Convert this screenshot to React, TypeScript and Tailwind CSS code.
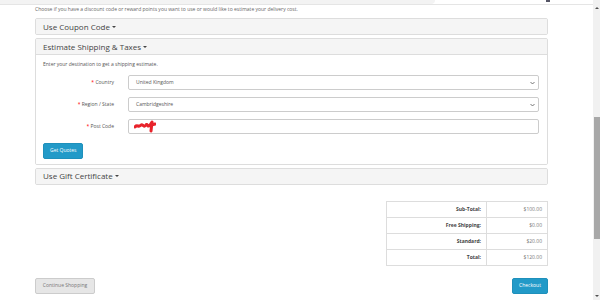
import React from 'react';

const font = { fontFamily: '"Open Sans", "Liberation Sans", sans-serif' };

function PanelHeading({ title }: { title: string }) {
  return (
    <div className="flex h-[15px] items-center bg-[#f5f5f5] px-[7px] text-[8px] text-[#444]">
      {title}
      <span className="ml-[2px] inline-block h-0 w-0 border-x-[2px] border-t-[2px] border-x-transparent border-t-[#444]" />
    </div>
  );
}

function Chevron() {
  return (
    <svg width="5" height="4" viewBox="0 0 5 4" className="absolute right-[3px] top-[5px]">
      <path d="M0.5 1 L2.5 3 L4.5 1" fill="none" stroke="#555" strokeWidth="0.8" />
    </svg>
  );
}

function FieldRow({ label, children }: { label: string; children: React.ReactNode }) {
  return (
    <div className="flex items-center">
      <label className="w-[85px] pr-[14px] text-right text-[5px] text-[#555]">
        <span className="text-[#f00]">* </span>
        {label}
      </label>
      <div className="relative flex h-[15px] flex-1 items-center rounded-[2px] border border-[#ccc] bg-white px-[7px] text-[5px] text-[#555]">
        {children}
      </div>
    </div>
  );
}

const totals = [
  ['Sub-Total:', '$100.00'],
  ['Free Shipping:', '$0.00'],
  ['Standard:', '$20.00'],
  ['Total:', '$120.00'],
];

export default function App() {
  return (
    <div className="flex h-[300px] w-[600px] overflow-hidden bg-white" style={font}>
      <div className="flex flex-1 flex-col">
        <div className="relative h-[5px] border-b border-[#e5e5e5]">
          <div className="h-[4px] w-[435px] rounded-br-[4px] bg-[#f3f3f3]" />
          <div className="absolute left-[546px] top-0 h-[2px] w-[4px] bg-[#556]" />
        </div>
        <div className="ml-[35px] mr-[45px] flex flex-col">
          <p className="mt-[1px] text-[5px] leading-[7px] text-[#666]">
            Choose if you have a discount code or reward points you want to use or would like to estimate your delivery cost.
          </p>

          <div className="mt-[5px] overflow-hidden rounded-[2px] border border-[#ddd]">
            <PanelHeading title="Use Coupon Code" />
          </div>

          <div className="mt-[3px] overflow-hidden rounded-[2px] border border-[#ddd]">
            <div className="border-b border-[#ddd]">
              <PanelHeading title="Estimate Shipping & Taxes" />
            </div>
            <div className="bg-white pb-[5px] pl-[7px] pr-[8px] pt-[6px]">
              <p className="text-[5px] leading-[7px] text-[#555]">
                Enter your destination to get a shipping estimate.
              </p>
              <div className="mt-[7px] flex flex-col gap-[7px]">
                <FieldRow label="Country">
                  United Kingdom
                  <Chevron />
                </FieldRow>
                <FieldRow label="Region / State">
                  Cambridgeshire
                  <Chevron />
                </FieldRow>
                <FieldRow label="Post Code">
                  <svg width="22" height="13" viewBox="0 0 22 13" className="-ml-[2px]">
                    <path
                      d="M1 7 C3 4 5 8 7 5 C9 4 10 8 12 5 C13 3 14 8 16 5 L18 2 L17 11 M14 6 L21 4"
                      fill="none"
                      stroke="#e8232b"
                      strokeWidth="3"
                      strokeLinecap="round"
                      strokeLinejoin="round"
                    />
                  </svg>
                </FieldRow>
              </div>
              <button className="mt-[7px] h-[16px] rounded-[2px] border border-[#1f90bb] bg-[#229ac8] px-[6px] text-[5px] text-white">
                Get Quotes
              </button>
            </div>
          </div>

          <div className="mt-[3px] overflow-hidden rounded-[2px] border border-[#ddd]">
            <PanelHeading title="Use Gift Certificate" />
          </div>

          <div className="mt-[16px] flex justify-end">
            <table className="w-[162px] border-collapse text-[5px] text-[#555]">
              <tbody>
                {totals.map(([k, v]) => (
                  <tr key={k} className="h-[16px]">
                    <td className="w-[100px] border border-[#ddd] pr-[5px] text-right font-bold text-[#444]">{k}</td>
                    <td className="border border-[#ddd] pr-[5px] text-right text-[#777]">{v}</td>
                  </tr>
                ))}
              </tbody>
            </table>
          </div>

          <div className="mt-[12px] flex justify-between">
            <button className="h-[16px] w-[60px] rounded-[2px] border border-[#ccc] bg-[#e6e6e6] text-[5px] text-[#777]">
              Continue Shopping
            </button>
            <button className="h-[16px] w-[36px] rounded-[2px] border border-[#1f90bb] bg-[#229ac8] text-[5px] text-white">
              Checkout
            </button>
          </div>
        </div>
      </div>
      <div className="flex w-[7px] flex-col items-center bg-[#f1f1f1]">
        <div className="mt-[7px] h-0 w-0 border-x-[2px] border-b-[2px] border-x-transparent border-b-[#505050]" />
        <div className="mt-[108px] h-[122px] w-[6px] bg-[#a8a8a8]" />
        <div className="mt-auto mb-[3px] h-0 w-0 border-x-[2px] border-t-[2px] border-x-transparent border-t-[#505050]" />
      </div>
    </div>
  );
}
